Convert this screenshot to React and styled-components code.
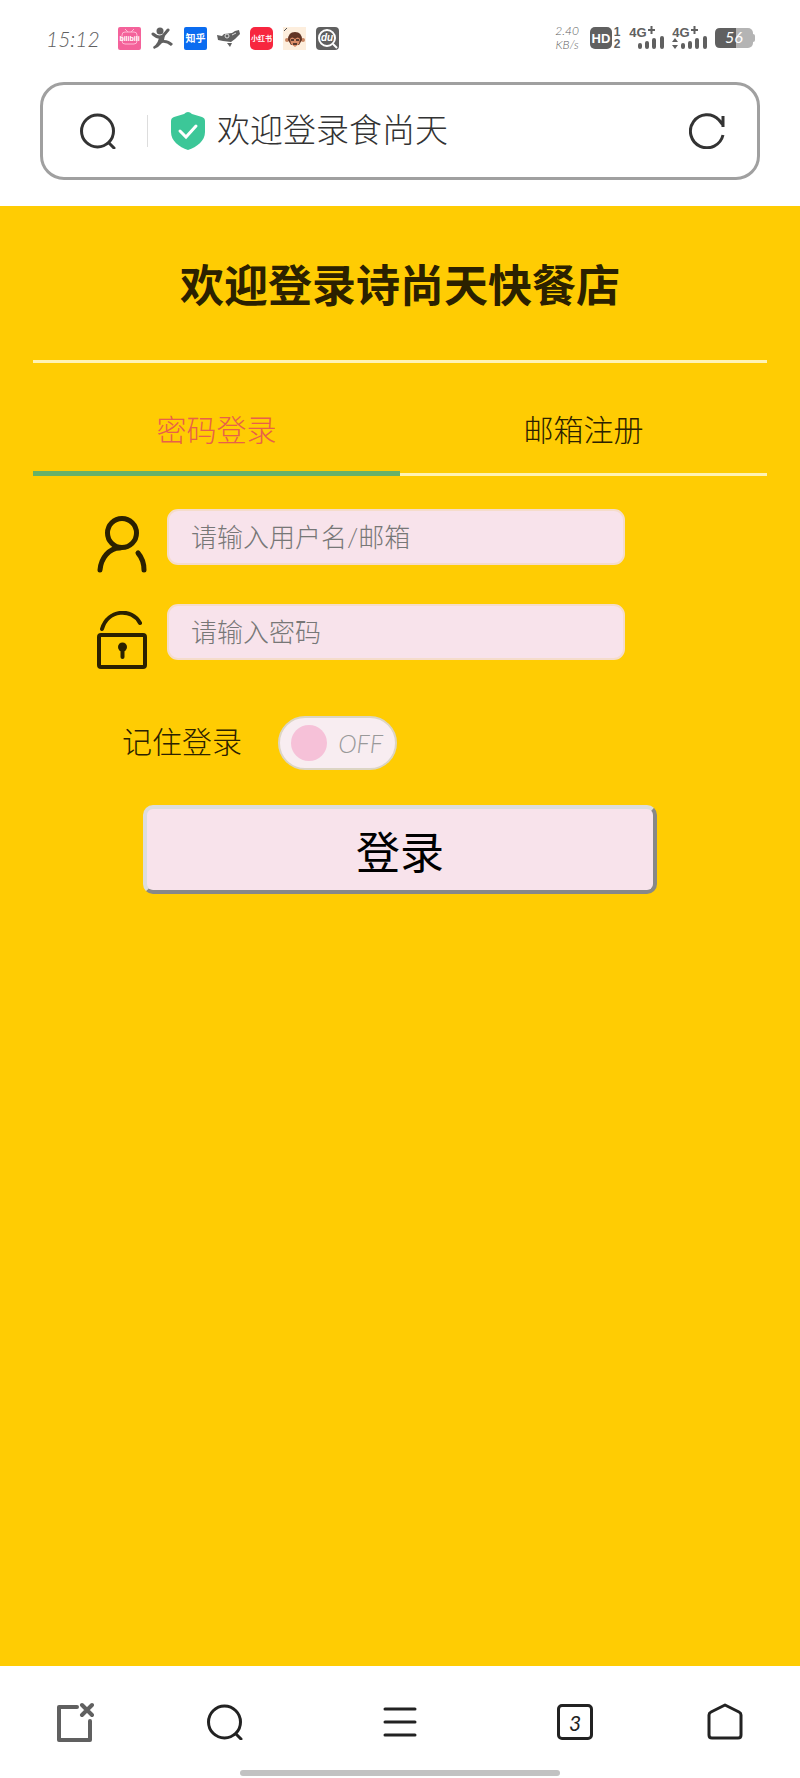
import React, { useState } from 'react'
import styled, { createGlobalStyle } from 'styled-components'

const App = () => {
  const [tab, setTab] = useState("login")
  const [remember, setRemember] = useState(false)

  return (
    <Page>
      <GlobalStyle />
      <StatusBar />
      <AddressArea>
        <AddressBar>
          <IconButton type="button" aria-label="搜索"><SearchIcon color="#333" /></IconButton>
          <Divider />
          <SiteInfo>
            <ShieldIcon />
            <SiteTitle>欢迎登录食尚天</SiteTitle>
          </SiteInfo>
          <IconButton type="button" aria-label="刷新"><ReloadIcon /></IconButton>
        </AddressBar>
      </AddressArea>

      <Main>
        <Title>欢迎登录诗尚天快餐店</Title>
        <Tabs>
          <Tab type="button" $active={tab === "login"} onClick={() => setTab("login")}>密码登录</Tab>
          <Tab type="button" $active={tab === "signup"} onClick={() => setTab("signup")}>邮箱注册</Tab>
        </Tabs>
        <Form onSubmit={(e) => e.preventDefault()}>
          <Field>
            <FieldLabel htmlFor="username" aria-label="用户名"><UserIcon /></FieldLabel>
            <Input id="username" type="text" placeholder="请输入用户名/邮箱" />
          </Field>
          <Field>
            <FieldLabel htmlFor="password" aria-label="密码"><LockIcon /></FieldLabel>
            <Input id="password" type="password" placeholder="请输入密码" />
          </Field>
          <RememberRow>
            <label htmlFor="remember">记住登录</label>
            <Switch $on={remember}>
              <Knob id="remember" type="checkbox" checked={remember} onChange={(e) => setRemember(e.target.checked)} />
              <span>{remember ? "ON" : "OFF"}</span>
            </Switch>
          </RememberRow>
          <Submit type="submit">登录</Submit>
        </Form>
      </Main>

      <BottomBar>
        <BottomNav>
          <IconButton type="button" aria-label="关闭页面"><ClosePageIcon /></IconButton>
          <IconButton type="button" aria-label="搜索"><SearchIcon color="#222" /></IconButton>
          <IconButton type="button" aria-label="菜单"><MenuIcon /></IconButton>
          <WindowCount type="button" aria-label="窗口 3">3</WindowCount>
          <IconButton type="button" aria-label="主页"><HomeIcon /></IconButton>
        </BottomNav>
        <HomeIndicator />
      </BottomBar>
    </Page>
  )
}

export default App

const StatusBar = () => (
  <Status>
    <Time>15:12</Time>
    <AppIcons>
      <svg width="23" height="23" viewBox="0 0 23 23">
        <rect width="23" height="23" rx="2" fill="#f4629a" />
        <path d="M7 2l3 3M16 2l-3 3" stroke="#ffb9d4" strokeWidth="1" />
        <rect x="4" y="5" width="15" height="12" rx="3" fill="none" stroke="#ffb9d4" />
        <SvgText x="11.5" y="14" $size={7} fill="#fff">bilibili</SvgText>
      </svg>
      <svg width="23" height="23" viewBox="0 0 23 23">
        <circle cx="9" cy="4" r="3.5" fill="#606060" />
        <path d="M2 7Q8 12 12 9L17 3" fill="none" stroke="#606060" strokeWidth="3" strokeLinecap="round" />
        <path d="M8 9L14 8 13 13Q18 13 22 17L20 19Q15 15 11 16 8 20 3 22L2 20Q8 16 8 9Z" fill="#606060" />
      </svg>
      <svg width="23" height="23" viewBox="0 0 23 23">
        <rect width="23" height="23" rx="2" fill="#0a6cf0" />
        <SvgText x="11.5" y="15" $size={10} fill="#fff">知乎</SvgText>
      </svg>
      <svg width="23" height="23" viewBox="0 0 23 23">
        <path d="M0 8l5 1 2-2 8-1 3-2 4-1 1 4-5 5-4 3-8-1-5-1z" fill="#606060" />
        <circle cx="10" cy="9" r="2" fill="none" stroke="#ddd" />
        <path d="M15 8l4-2" stroke="#ddd" />
        <path d="M10 16h5l-2 4z" fill="#606060" />
      </svg>
      <svg width="23" height="23" viewBox="0 0 23 23">
        <rect width="23" height="23" rx="5" fill="#f7263f" />
        <SvgText x="11.5" y="14" $size={7} fill="#fff">小红书</SvgText>
      </svg>
      <svg width="23" height="23" viewBox="0 0 23 23">
        <rect width="23" height="23" fill="#fdeedd" />
        <path d="M1 4l3-3" stroke="#555" />
        <circle cx="4" cy="13" r="2" fill="#c88563" />
        <circle cx="20" cy="13" r="2" fill="#c88563" />
        <path d="M5 13q0-8 7-8t7 8l-3 5H8z" fill="#623525" />
        <path d="M7 12q2-3 5 0 3-3 5 0l-1 5-4 3-4-3z" fill="#d98b66" />
        <path d="M8 13h3M13 13h3M10 17h4" stroke="#32201c" strokeWidth="1.5" />
      </svg>
      <svg width="23" height="23" viewBox="0 0 23 23">
        <rect width="23" height="23" rx="4" fill="#606060" />
        <circle cx="11" cy="11" r="8" fill="none" stroke="#fff" strokeWidth="2" />
        <path d="M17 17l4 4" stroke="#fff" strokeWidth="2" />
        <SvgText x="11" y="14" $size={10} fill="#fff" fontStyle="italic">du</SvgText>
      </svg>
    </AppIcons>
    <StatusRight>
      <Speed>2.40<br />KB/s</Speed>
      <svg width="32" height="26" viewBox="0 0 32 26">
        <rect y="2" width="22" height="22" rx="5" fill="#606060" />
        <SvgText x="11" y="18" $size={13} fill="#fff">HD</SvgText>
        <SvgText x="27" y="11" $size={12} fill="#606060">1</SvgText>
        <SvgText x="27" y="23" $size={12} fill="#606060">2</SvgText>
      </svg>
      <Signal />
      <Signal data />
      <svg width="40" height="22" viewBox="0 0 40 22">
        <rect x="16" y="1" width="22" height="20" rx="5" fill="#b4b4b4" />
        <rect x="36" y="7" width="4" height="8" rx="2" fill="#b4b4b4" />
        <path d="M5 1h16v20H5q-5 0-5-5V6q0-5 5-5z" fill="#606060" />
        <BatteryText x="19" y="16">56</BatteryText>
      </svg>
    </StatusRight>
  </Status>
)

const Signal = ({ data }) => (
  <svg width="36" height="26" viewBox="0 0 36 26">
    <SvgText x="9" y="12" $size={13} fill="#606060">4G</SvgText>
    <path d="M19 5h7M22.5 1v8" stroke="#606060" strokeWidth="2" />
    <path d="M11 20v2M18 18v4M25 15v7M33 13v9" stroke="#606060" strokeWidth="4" strokeLinecap="round" />
    {data && <path d="M0 17l3-4 3 4zM0 20l3 4 3-4z" fill="#606060" />}
  </svg>
)

const SearchIcon = ({ color }) => (
  <svg width="36" height="36" viewBox="0 0 36 36" fill="none" stroke={color} strokeWidth="3" strokeLinecap="round">
    <circle cx="17.5" cy="18" r="16" />
    <path d="M29 30l5 5" />
  </svg>
)

const ReloadIcon = () => (
  <svg width="36" height="36" viewBox="0 0 36 36" fill="none" stroke="#333" strokeWidth="3">
    <path d="M34 22A16.5 16.5 0 1 1 30 7L34 12M34 3V14" />
  </svg>
)

const ShieldIcon = () => (
  <svg width="34" height="38" viewBox="0 0 34 38">
    <path d="M17 0Q19 0 21 2L31 5Q34 6 34 9V20C34 29 26 35 17 38C8 35 0 29 0 20V9Q0 6 3 5L13 2Q15 0 17 0Z" fill="#3cc798" />
    <path d="M9 19l6 6 10-11" fill="none" stroke="#fff" strokeWidth="3" strokeLinecap="round" />
  </svg>
)

const UserIcon = () => (
  <svg width="50" height="58" viewBox="0 0 50 58" fill="none" stroke="#2b2100" strokeWidth="5" strokeLinecap="round">
    <circle cx="25" cy="17" r="14.5" />
    <path d="M3 54C4 42 12 32 23 32M41 37Q47 44 47 54" />
  </svg>
)

const LockIcon = () => (
  <svg width="50" height="58" viewBox="0 0 50 58" fill="none" stroke="#2b2100" strokeWidth="4" strokeLinecap="round">
    <rect x="2" y="24" width="46" height="32" rx="2" />
    <path d="M5 18C11-2 35-3 43 12" />
    <circle cx="25.5" cy="36" r="4.5" fill="#2b2100" stroke="none" />
    <path d="M25.5 38v8" />
  </svg>
)

const ClosePageIcon = () => (
  <svg width="38" height="40" viewBox="0 0 38 40" fill="none" stroke="#606060" strokeWidth="4" strokeLinecap="round" strokeLinejoin="round">
    <path d="M21 5H3v33h31V19M26 3l10 10M36 3L26 13" />
  </svg>
)

const MenuIcon = () => (
  <svg width="34" height="34" viewBox="0 0 34 34" stroke="#222" strokeWidth="3" strokeLinecap="round">
    <path d="M2 4h30M2 17h30M2 30h30" />
  </svg>
)

const HomeIcon = () => (
  <svg width="36" height="38" viewBox="0 0 36 38" fill="none" stroke="#222" strokeWidth="3" strokeLinejoin="round">
    <path d="M18 2L32 9Q34 10 34 12V32Q34 35 31 35H5Q2 35 2 32V12Q2 10 4 9Z" />
  </svg>
)

const GlobalStyle = createGlobalStyle`
  * {
    box-sizing: border-box;
  }
  body {
    margin: 0;
    background: #fff;
  }
  body, button, input {
    font-family: Lato, "Noto Sans CJK SC", sans-serif;
    font-weight: 300;
  }
  svg {
    display: block;
    flex-shrink: 0;
  }
`

const Page = styled.div`
  display: flex;
  flex-direction: column;
  min-height: 100vh;
`

const Status = styled.header`
  display: flex;
  align-items: center;
  height: 76px;
  padding: 0 45px 0 46px;
  color: #606060;
`

const Time = styled.span`
  width: 72px;
  font-size: 21px;
  font-style: italic;
`

const AppIcons = styled.div`
  display: flex;
  gap: 10px;
`

const StatusRight = styled.div`
  display: flex;
  align-items: center;
  gap: 7px;
  margin-left: auto;
`

const Speed = styled.span`
  margin-right: 4px;
  font-size: 12px;
  line-height: 14px;
  font-style: italic;
  text-align: center;
`

const SvgText = styled.text`
  font-family: "Liberation Sans", "Noto Sans CJK SC", sans-serif;
  font-size: ${(props) => props.$size}px;
  font-weight: 700;
  text-anchor: middle;
`

const BatteryText = styled.text`
  fill: #fff;
  font-size: 16px;
  font-style: italic;
  font-weight: 400;
  text-anchor: middle;
`

const AddressArea = styled.div`
  padding: 6px 40px 26px;
`

const AddressBar = styled.div`
  display: flex;
  align-items: center;
  height: 98px;
  padding: 0 32px 0 37px;
  border: 3px solid #a0a0a0;
  border-radius: 24px;
`

const IconButton = styled.button`
  display: flex;
  justify-content: center;
  align-items: center;
  padding: 0;
  border: none;
  background: none;
  cursor: pointer;
`

const Divider = styled.span`
  width: 1px;
  height: 32px;
  margin: 0 23px 0 31px;
  background: #ddd;
`

const SiteInfo = styled.div`
  display: flex;
  flex: 1;
  align-items: center;
  gap: 12px;
`

const SiteTitle = styled.span`
  padding-bottom: 4px;
  color: #333;
  font-size: 33px;
  line-height: 40px;
`

const Main = styled.main`
  flex: 1;
  padding: 0 33px;
  background: #ffcc03;
  color: #2b2100;
`

const Title = styled.h1`
  margin: 0;
  padding: 45px 0;
  border-bottom: 3px solid #fff3b5;
  font-family: "Noto Sans CJK SC", sans-serif;
  font-size: 44px;
  font-weight: 700;
  line-height: 64px;
  text-align: center;
`

const Tabs = styled.nav`
  display: flex;
`

const Tab = styled.button`
  flex: 1;
  padding: ${(props) => (props.$active ? "46px 0 22px" : "46px 0 24px")};
  border: none;
  border-bottom: ${(props) => (props.$active ? "5px solid #67b168" : "3px solid #fff3b5")};
  background: none;
  color: ${(props) => (props.$active ? "#e8604a" : "#2b2100")};
  font-size: 30px;
  line-height: 40px;
  cursor: pointer;
`

const Form = styled.form`
  display: flex;
  flex-direction: column;
  gap: 30px;
  padding: 33px 0;
`

const Field = styled.div`
  display: flex;
  align-items: flex-start;
  gap: 20px;
  padding: 0 142px 0 64px;
`

const FieldLabel = styled.label`
  padding-top: 7px;
`

const Input = styled.input`
  flex: 1;
  min-width: 0;
  height: 56px;
  padding: 0 22px;
  border: 2px solid #f5dccb;
  border-radius: 11px;
  background: #f8e3eb;
  color: #2b2100;
  font-size: 26px;
  outline: none;

  &::placeholder {
    color: #777;
    opacity: 1;
  }
`

const RememberRow = styled.div`
  display: flex;
  align-items: center;
  gap: 36px;
  padding: 17px 89px 5px;
  font-size: 30px;
  line-height: 40px;

  label {
    padding-bottom: 4px;
  }
`

const Switch = styled.div`
  display: flex;
  flex-direction: ${(props) => (props.$on ? "row-reverse" : "row")};
  align-items: center;
  justify-content: space-between;
  width: 119px;
  height: 54px;
  padding: 0 12px 0 11px;
  border: 2px solid #dcd5c4;
  border-radius: 27px;
  background: #f8edf1;
  color: #999;
  font-size: 25px;
  font-style: italic;
`

const Knob = styled.input`
  appearance: none;
  width: 36px;
  height: 36px;
  margin: 0;
  border-radius: 50%;
  background: #f6c1d8;
  cursor: pointer;
`

const Submit = styled.button`
  align-self: center;
  width: 70%;
  height: 89px;
  border: 4px solid;
  border-color: #ddd #888 #888 #ddd;
  border-radius: 10px;
  background: #f8e3eb;
  color: #000;
  font-family: "Noto Sans CJK SC", sans-serif;
  font-size: 44px;
  font-weight: 400;
  cursor: pointer;
`

const BottomBar = styled.footer`
  display: flex;
  flex-direction: column;
  align-items: center;
  padding-bottom: 2px;
  background: #fff;
`

const BottomNav = styled.nav`
  display: grid;
  grid-template-columns: 3fr 3fr 4fr 3fr 3fr;
  place-items: center;
  width: 100%;
  height: 104px;
  padding-top: 8px;
`

const WindowCount = styled(IconButton)`
  width: 36px;
  height: 36px;
  border: 3px solid #222;
  border-radius: 5px;
  color: #222;
  font-size: 21px;
  font-style: italic;
  font-weight: 400;
`

const HomeIndicator = styled.div`
  width: 40%;
  height: 6px;
  border-radius: 3px;
  background: #c2c2c2;
`
